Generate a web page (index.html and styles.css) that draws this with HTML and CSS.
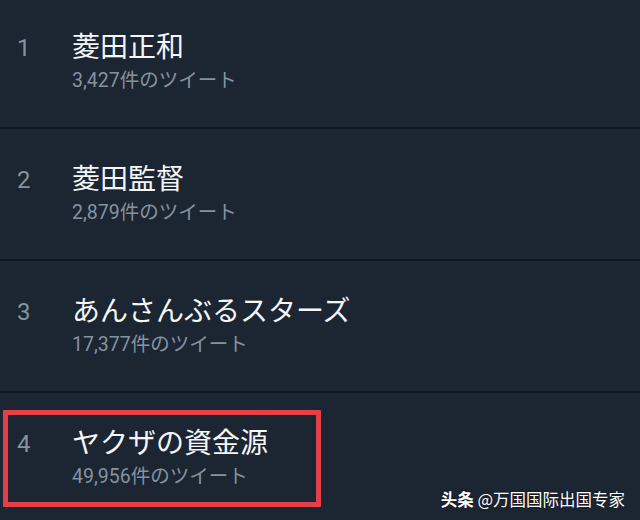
FILE: index.html
```html
<!DOCTYPE html>
<html lang="ja">
<head>
    <meta charset="UTF-8">
    <meta name="viewport" content="width=device-width, initial-scale=1.0">
    <title>トレンド</title>
    <link rel="stylesheet" href="styles.css">
</head>
<body>
    <div class="trends">
        <div class="trend first">
            <span class="rank">1</span>
            <div class="info">
                <div class="title">菱田正和</div>
                <div class="count">3,427件のツイート</div>
            </div>
        </div>
        <div class="trend">
            <span class="rank">2</span>
            <div class="info">
                <div class="title">菱田監督</div>
                <div class="count">2,879件のツイート</div>
            </div>
        </div>
        <div class="trend">
            <span class="rank">3</span>
            <div class="info">
                <div class="title">あんさんぶるスターズ</div>
                <div class="count">17,377件のツイート</div>
            </div>
        </div>
        <div class="trend last">
            <span class="rank">4</span>
            <div class="info">
                <div class="title">ヤクザの資金源</div>
                <div class="count">49,956件のツイート</div>
            </div>
            <div class="highlight"></div>
        </div>
    </div>

    <div class="watermark"><b>头条</b> @万国国际出国专家</div>
</body>
</html>
```

FILE: styles.css
```css
body {
    background-color: #1c2532;
    font-family: Roboto, "Noto Sans CJK JP", sans-serif;
    margin: 0;
    padding: 0;
    height: 520px;
    overflow: hidden;
    position: relative;
}

.trends {
    display: flex;
    flex-direction: column;
}

.trend {
    display: flex;
    align-items: flex-start;
    height: 96px;
    padding: 34px 0 0 17px;
    border-bottom: 2px solid #0f1620;
    position: relative;
}

.trend.first {
    padding-top: 31px;
}

.trend.last {
    border-bottom: none;
}

.rank {
    width: 55px;
    font-size: 24px;
    line-height: 34px;
    color: #8592a0;
}

.title {
    font-size: 28px;
    line-height: 34px;
    color: #f4f6f8;
}

.count {
    margin-top: 4px;
    font-size: 19.5px;
    line-height: 24px;
    color: #8592a0;
}

.highlight {
    position: absolute;
    left: 3px;
    top: 17px;
    width: 308px;
    height: 87px;
    border: 5px solid #e5404a;
    border-radius: 1px;
}

.watermark {
    position: absolute;
    right: 15px;
    bottom: 10px;
    font-family: "Noto Sans CJK SC", sans-serif;
    font-size: 16.5px;
    line-height: 22px;
    color: #ffffff;
    text-shadow: 0 0 2px rgba(0, 0, 0, 0.6);
}

.watermark b {
    font-weight: bold;
}
```
